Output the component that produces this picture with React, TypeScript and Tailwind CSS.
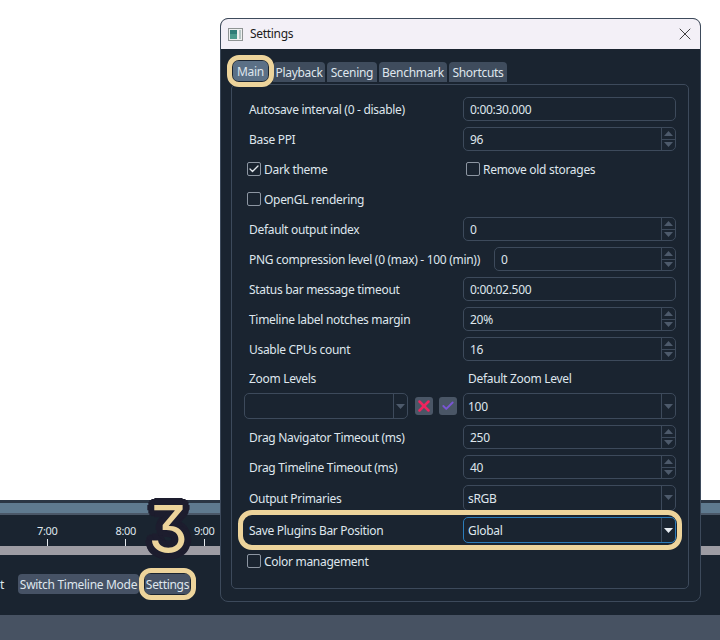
import { Check, X } from 'lucide-react';
import type { ReactNode } from 'react';

const borderCls = 'border border-[#3d4a5b] rounded-[5px]';

function Highlight({ className }: { className: string }) {
  return <div className={`absolute border-[5px] border-[#edd49b] pointer-events-none ${className}`} />;
}

function Arrow({ up, color = '#4d5a6b' }: { up?: boolean; color?: string }) {
  return (
    <svg width="9" height="5" viewBox="0 0 9 5">
      <path d={up ? 'M4.5 0 9 5H0z' : 'M0 0h9L4.5 5z'} fill={color} />
    </svg>
  );
}

function Field({ value, className = 'w-[213px]' }: { value: string; className?: string }) {
  return (
    <div className={`h-[24px] flex items-center pl-[6px] pt-[2px] ${borderCls} ${className}`}>{value}</div>
  );
}

function Spin({ value, className = 'w-[213px]' }: { value: string; className?: string }) {
  return (
    <div className={`h-[24px] flex ${borderCls} ${className}`}>
      <div className="flex-1 flex items-center pl-[6px] pt-[2px]">{value}</div>
      <div className="w-[14px] border-l border-[#3d4a5b] flex flex-col">
        <div className="flex-1 flex items-center justify-center border-b border-[#3d4a5b]">
          <Arrow up />
        </div>
        <div className="flex-1 flex items-center justify-center">
          <Arrow />
        </div>
      </div>
    </div>
  );
}

function Combo({ value, active, className = 'w-[213px]' }: { value: string; active?: boolean; className?: string }) {
  return (
    <div className={`h-[26px] flex rounded-[5px] border ${active ? 'border-[#2b7cba]' : 'border-[#3d4a5b]'} ${className}`}>
      <div className="flex-1 flex items-center pl-[4px] pt-[2px]">{value}</div>
      <div className="w-[14px] border-l border-[#3d4a5b] flex items-center justify-center">
        <Arrow color={active ? '#e8edf2' : '#4d5a6b'} />
      </div>
    </div>
  );
}

function Box({ checked, label }: { checked?: boolean; label: string }) {
  return (
    <div className="flex items-center gap-[3px]">
      <div className="w-[14px] h-[14px] border border-[#8d96a2] rounded-[2px] flex items-center justify-center">
        {checked && <Check size={12} strokeWidth={2.5} className="text-[#e4e9ee]" />}
      </div>
      <span className="pt-[2px]">{label}</span>
    </div>
  );
}

function Row({ label, children }: { label: string; children: ReactNode }) {
  return (
    <div className="h-[30px] flex items-center justify-between pl-[17px] pr-[12px]">
      <span className="pt-[2px] whitespace-nowrap">{label}</span>
      {children}
    </div>
  );
}

export default function App() {
  const tabs = [
    { name: 'Playback', w: 'w-[52px]' },
    { name: 'Scening', w: 'w-[50px]' },
    { name: 'Benchmark', w: 'w-[68px]' },
    { name: 'Shortcuts', w: 'w-[58px]' },
  ];

  return (
    <div className="relative w-[720px] h-[640px] overflow-hidden flex flex-col bg-white text-[12px] tracking-[-0.3px] text-[#dfe6ed] font-['Noto_Sans','Open_Sans',sans-serif]">
      {/* Main window behind the dialog */}
      <div className="h-[500px] bg-white" />
      <div className="h-[115px] bg-[#1a2430] flex flex-col">
        <div className="h-[3px] bg-[#2b3644]" />
        <div className="h-[10px] bg-[#5f7a8f]" />
        <div className="h-[2px] bg-[#4a5767]" />
        <div className="h-[31px] pt-[9px] pl-2 flex">
          {['7:00', '8:00', '9:00'].map((t) => (
            <div key={t} className="w-[78.5px] flex flex-col items-center text-[11px] leading-[14px]">
              <span>{t}</span>
              <div className="w-px h-[7px] bg-[#e6ebf0] mt-[1px]" />
            </div>
          ))}
        </div>
        <div className="h-[9px] bg-[#9d9ca3]" />
        <div className="flex items-center mt-[19px]">
          <span className="w-[18px] pt-[2px]">t</span>
          <div className="h-[20px] w-[121px] bg-[#465265] rounded-[4px] pt-[2px] flex items-center justify-center whitespace-nowrap">
            Switch Timeline Mode
          </div>
          <div className="relative ml-[6px] h-[20px] w-[45px] bg-[#465265] rounded-[4px] pt-[2px] flex items-center justify-center">
            Settings
            <Highlight className="-inset-[6px] rounded-[12px]" />
          </div>
        </div>
      </div>
      <div className="flex-1 bg-[#475262]" />

      {/* Step number */}
      <div className="absolute left-[148px] top-[489px] w-[40px] text-center text-[#edd49b] text-[65px] leading-[80px] font-['Inter',sans-serif] [font-feature-settings:'cv09'] [text-shadow:7px_0_#1d1d2e,-7px_0_#1d1d2e,0_7px_#1d1d2e,0_-7px_#1d1d2e,5px_5px_#1d1d2e,-5px_5px_#1d1d2e,5px_-5px_#1d1d2e,-5px_-5px_#1d1d2e,6px_3px_#1d1d2e,-6px_3px_#1d1d2e,6px_-3px_#1d1d2e,-6px_-3px_#1d1d2e,3px_6px_#1d1d2e,-3px_6px_#1d1d2e,3px_-6px_#1d1d2e,-3px_-6px_#1d1d2e]">
        3
      </div>

      {/* Settings dialog */}
      <div className="absolute left-[220px] top-[18px] w-[481px] h-[584px] rounded-[8px] border border-[#3d4a5b] overflow-hidden flex flex-col bg-[#1a2430]">
        <div className="h-[30px] shrink-0 bg-[#f3f0f7] flex items-center pl-[7px] pr-[5px] text-[#1c1c1c]">
          <svg width="15" height="13" viewBox="0 0 15 13" className="mr-[7px]">
            <rect x="0.5" y="0.5" width="14" height="12" fill="#eef0f0" stroke="#8f9494" />
            <rect x="2" y="2" width="7" height="9" fill="#2f7d78" />
            <rect x="2" y="6" width="7" height="5" fill="#4a9a8d" />
            <rect x="11" y="2" width="2" height="9" fill="#b8c6c6" />
          </svg>
          <span className="flex-1">Settings</span>
          <X size={20} strokeWidth={1} className="text-[#1c1c1c]" />
        </div>
        <div className="flex-1 flex flex-col">
          <div className="h-[35px] pt-[13px] pl-[12px] flex gap-[2px] whitespace-nowrap">
            <div className="relative h-[20px] -mt-px w-[35px] mr-[3px] bg-[#5b7086] rounded-[5px] flex items-center justify-center pt-[1px]">
              Main
              <Highlight className="-inset-[6px] rounded-[12px]" />
            </div>
            {tabs.map((t) => (
              <div key={t.name} className={`h-[20px] ${t.w} bg-[#3f4c5d] rounded-t-[4px] flex items-center justify-center pt-[2px]`}>
                {t.name}
              </div>
            ))}
          </div>
          <div className={`ml-[10px] mr-[11px] mb-[12px] flex-1 pt-[9px] ${borderCls}`}>
            <Row label="Autosave interval (0 - disable)">
              <Field value="0:00:30.000" />
            </Row>
            <Row label="Base PPI">
              <Spin value="96" />
            </Row>
            <div className="h-[30px] flex items-center pl-[15px] pr-[12px]">
              <div className="w-[219px]">
                <Box checked label="Dark theme" />
              </div>
              <Box label="Remove old storages" />
            </div>
            <div className="h-[30px] flex items-center pl-[15px]">
              <Box label="OpenGL rendering" />
            </div>
            <Row label="Default output index">
              <Spin value="0" />
            </Row>
            <Row label="PNG compression level (0 (max) - 100 (min))">
              <Spin value="0" className="w-[182px]" />
            </Row>
            <Row label="Status bar message timeout">
              <Field value="0:00:02.500" />
            </Row>
            <Row label="Timeline label notches margin">
              <Spin value="20%" />
            </Row>
            <Row label="Usable CPUs count">
              <Spin value="16" />
            </Row>
            <div className="h-[28px] flex items-center pl-[17px]">
              <span className="w-[219px] pt-[2px]">Zoom Levels</span>
              <span className="pt-[2px]">Default Zoom Level</span>
            </div>
            <div className="h-[28px] flex items-center pl-[12px] pr-[12px]">
              <Combo value="" className="w-[164px]" />
              <div className="w-[18px] h-[18px] ml-[7px] rounded-[3px] bg-[#4a5666] flex items-center justify-center">
                <X size={18} strokeWidth={3.4} className="text-[#f0245e]" />
              </div>
              <div className="w-[18px] h-[18px] ml-[6px] rounded-[3px] bg-[#4a5666] flex items-center justify-center">
                <Check size={14} strokeWidth={3.2} className="text-[#7a55d6]" />
              </div>
              <Combo value="100" className="w-[213px] ml-[6px]" />
            </div>
            <div className="mt-[2px]">
              <Row label="Drag Navigator Timeout (ms)">
                <Spin value="250" />
              </Row>
              <Row label="Drag Timeline Timeout (ms)">
                <Spin value="40" />
              </Row>
            </div>
            <div className="h-[31px] flex items-center justify-between pl-[17px] pr-[12px]">
              <span className="pt-[2px]">Output Primaries</span>
              <Combo value="sRGB" />
            </div>
            <div className="relative h-[34px] flex items-center justify-between pl-[17px] pr-[12px]">
              <span className="pt-[2px]">Save Plugins Bar Position</span>
              <Combo value="Global" active />
              <Highlight className="left-[6px] right-[6px] top-[-3px] bottom-[-3px] rounded-[14px]" />
            </div>
            <div className="h-[28px] flex items-center pl-[15px]">
              <Box label="Color management" />
            </div>
          </div>
        </div>
      </div>
    </div>
  );
}
